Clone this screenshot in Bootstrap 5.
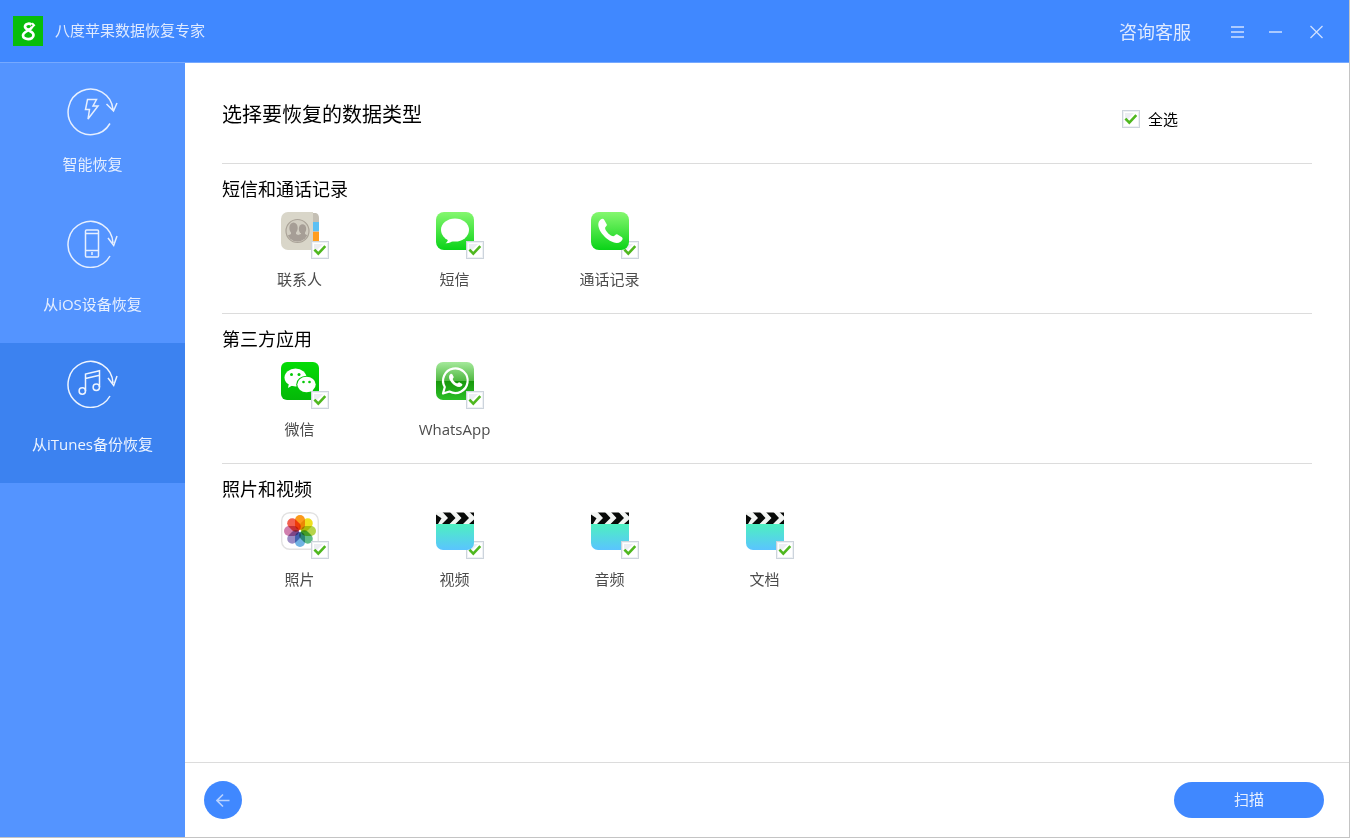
<!DOCTYPE html>
<html lang="zh-CN">
<head>
<meta charset="utf-8">
<meta name="viewport" content="width=device-width, initial-scale=1">
<title>八度苹果数据恢复专家</title>
<link href="https://cdn.jsdelivr.net/npm/bootstrap@5.3.0/dist/css/bootstrap.min.css" rel="stylesheet">
<style>
  body { font-family: "Open Sans", "Noto Sans CJK SC", sans-serif; font-size: 15px; line-height: 20px; color: #000; }
  .app-window { min-height: 100vh; border-right: 1px solid #c4c4c4; border-bottom: 1px solid #c4c4c4; }
  .title-bar { height: 63px; background: #4088ff; border-bottom: 1px solid #76a9ff; padding: 0 26px 0 13px; color: #dfeaff; }
  .app-name { padding: 0 0 2px 12px; }
  .title-tools { padding-top: 2px; }
  .title-bar a { font-size: 18px; color: #dfeaff; margin-right: 39px; }
  .bare-btn { border: 0; padding: 0; background: none; color: #cfe0ff; display: flex; }
  .side-nav { width: 185px; background: #5494ff; }
  .side-nav a { height: 140px; padding: 16px 0 29px; color: #e6efff; }
  .side-nav a:first-child { padding-top: 24px; }
  .side-nav a.active { background: #3c82f0; color: #edf4ff; }
  .type-panel { padding: 0 37px; }
  .panel-head { height: 100px; padding: 4px 134px 0 0; }
  .panel-head h1 { font-size: 20px; line-height: 28px; font-weight: 400; margin: 0; }
  .panel-head label { margin-top: 7px; }
  .type-group { height: 150px; border-top: 1px solid #dcdcdc; padding-top: 13px; }
  .type-group h2 { font-size: 18px; line-height: 24px; font-weight: 400; margin: 0 0 11px; }
  .type-tile { width: 155px; color: #4c4c4c; }
  .tile-art { width: 38px; height: 38px; margin-bottom: 19px; }
  .tile-art svg { position: relative; display: block; }
  .tick { appearance: none; width: 18px; height: 18px; margin: 0; flex: none; border: 1px solid #cdd4dc; outline: 1px solid #eef1f5; outline-offset: -2px;
    background: #fff url("data:image/svg+xml,%3Csvg xmlns='http://www.w3.org/2000/svg' viewBox='0 0 16 16'%3E%3Cpath d='M2 2h9L2 11z' fill='%23eceef3'/%3E%3Cpath d='M2.4 7.600l3.900 4 7-7.400' fill='none' stroke='%234fb81f' stroke-width='2.600'/%3E%3C/svg%3E") center/16px 16px; }
  .tick:not(:checked) { background-image: none; }
  .tile-art .tick { position: absolute; left: 30px; top: 29px; }
  .under .tick { z-index: 0; }
  .under svg { z-index: 1; }
  .action-bar { height: 75px; border-top: 1px solid #dcdcdc; padding: 0 25px 1px 19px; }
  .back-btn { width: 38px; height: 38px; border: 0; border-radius: 50%; background: #4088ff; color: #b9d2ff; }
  .scan-btn { width: 150px; height: 36px; padding: 0 0 2px; border: 0; border-radius: 18px; background: #4088ff; color: #e6efff; }
</style>
</head>
<body>
<svg width="0" height="0" class="position-absolute" aria-hidden="true">
  <defs>
    <linearGradient id="greenFill" x2="0" y2="1"><stop stop-color="#85f76f"/><stop offset="1" stop-color="#0ad318"/></linearGradient>
    <linearGradient id="chatFill" x2="0" y2="1"><stop stop-color="#04dc06"/><stop offset="1" stop-color="#04b808"/></linearGradient>
    <linearGradient id="whatsFill" x2="0" y2="1"><stop stop-color="#a5e99b"/><stop offset=".49" stop-color="#51b943"/><stop offset=".51" stop-color="#18990c"/><stop offset="1" stop-color="#2cbf27"/></linearGradient>
    <linearGradient id="clipFill" x2="0" y2="1"><stop stop-color="#4df0c0"/><stop offset="1" stop-color="#5ac4ff"/></linearGradient>
    <clipPath id="clapTop"><path d="M0 .5h38v11.500H0z"/></clipPath>
    <clipPath id="faceDisc"><circle cx="16.500" cy="19" r="10.600"/></clipPath>
    <symbol id="clapper" viewBox="0 0 38 38">
      <path d="M0 12h38V31a7 7 0 0 1-7 7H7a7 7 0 0 1-7-7z" fill="url(#clipFill)"/>
      <g clip-path="url(#clapTop)"><path d="M0 0h38v12H0z" fill="#f3f5f3"/>
      <path d="M0 2.500l5.500 3.700L2 12H0zM6.500 0h7.500l5.500 6-6 6H6l6-6zM20 0h7.500l5.500 6-6 6h-7.500l6-6zM33.500 0H38v4.500zM38 7.500V12h-5z" fill="#080a08"/></g>
    </symbol>
    <path id="handset" d="M8 9.500c1.500-3 4.200-3.800 5.300-1.600l2.400 4.300c.9 1.700-1.700 2.500-1.600 4 .3 3 5.500 8 8.300 8 1.700 0 2.200-2.700 4.100-1.700l4.100 2.500c2 1.400.8 3.300-1 4.700C22 35.500 3.500 18.500 8 9.500z"/>
  </defs>
</svg>

<div class="app-window d-flex flex-column">
  <header class="title-bar d-flex align-items-center justify-content-between">
    <div class="d-flex align-items-center">
      <svg width="30" height="30" viewBox="0 0 30 30" aria-hidden="true"><path d="M0 0h30v30H0z" fill="#08bd0b"/><g fill="none" stroke="#fff"><path d="M18.500 8.500c-2.500-1.500-6.500-.8-6.500 2.300 0 3.600 8.500 4 8.500 8.300 0 5.300-10.500 5.300-10.500.3 0-4.500 9-5 9-9" stroke-width="2.700"/><path d="M19 7.300l2 2-2 2" stroke-width="2"/></g></svg>
      <span class="app-name">八度苹果数据恢复专家</span>
    </div>
    <div class="title-tools d-flex align-items-center">
      <a href="#" class="text-decoration-none">咨询客服</a>
      <button class="bare-btn me-4" type="button" aria-label="菜单"><svg width="14" height="14" fill="none" stroke="currentColor" stroke-width="1.500"><path d="M1 2h13M1 7h13M1 12h13"/></svg></button>
      <button class="bare-btn me-4" type="button" aria-label="最小化"><svg width="14" height="14" fill="none" stroke="currentColor" stroke-width="1.500"><path d="M1 7h13"/></svg></button>
      <button class="bare-btn ms-1" type="button" aria-label="关闭"><svg width="13" height="14" fill="none" stroke="currentColor" stroke-width="1.300"><path d="M.500 1l12 12M12.500 1l-12 12"/></svg></button>
    </div>
  </header>

  <div class="d-flex flex-grow-1">
    <nav class="side-nav flex-shrink-0">
      <a href="#" class="d-flex flex-column align-items-center justify-content-between text-decoration-none">
        <svg width="53" height="49" viewBox="0 0 53 49" fill="none" stroke="currentColor" stroke-width="1.500"><path d="M47 22.500A22.500 22.800 0 1 0 44 36.500M40.500 17l7 7L51 16M21.500 12.500h9l-3.500 6.500h5l-10 13 1.500-9.500h-4z"/></svg>
        <span>智能恢复</span>
      </a>
      <a href="#" class="d-flex flex-column align-items-center justify-content-between text-decoration-none">
        <svg width="53" height="49" viewBox="0 0 53 49" fill="none" stroke="currentColor" stroke-width="1.500"><path d="M47 24A22.500 23 0 1 0 44 37M42 19l5.700 7.500L51 17"/><rect x="19.500" y="11" width="13" height="27" rx="1"/><path d="M19.500 14.500h13M19.500 31.500h13M26 33v3"/></svg>
        <span>从iOS设备恢复</span>
      </a>
      <a href="#" class="active d-flex flex-column align-items-center justify-content-between text-decoration-none" aria-current="page">
        <svg width="53" height="49" viewBox="0 0 53 49" fill="none" stroke="currentColor" stroke-width="1.500"><path d="M47 24A22.500 23 0 1 0 44 37M42 19l5.700 7.500L51 17M19.500 32V15l14-3.200V28M19.500 19.500l14-3.200"/><circle cx="16.300" cy="32" r="3.200"/><circle cx="30.300" cy="28.300" r="3.200"/></svg>
        <span>从iTunes备份恢复</span>
      </a>
    </nav>

    <div class="d-flex flex-column flex-grow-1">
      <main class="type-panel flex-grow-1">
        <div class="panel-head d-flex align-items-center justify-content-between">
          <h1>选择要恢复的数据类型</h1>
          <label class="d-flex align-items-center gap-2"><input class="tick" id="all" type="checkbox" checked><span>全选</span></label>
        </div>

        <section class="type-group">
          <h2>短信和通话记录</h2>
          <div class="d-flex">
            <label class="type-tile d-flex flex-column align-items-center">
              <span class="tile-art position-relative">
                <svg width="38" height="38"><path d="M30 1h5q3 1 3 5v26q0 5-4 6h-6z" fill="#c4bfb4"/><path d="M32 10h6v9h-6z" fill="#5cc0f4"/><path d="M32 20h6v10h-6z" fill="#ff9d1f"/><path d="M32 30h6v4l-6 3z" fill="#e7e4dc"/><path d="M7 0h25v38H7a7 7 0 0 1-7-7V7a7 7 0 0 1 7-7z" fill="#d9d6c9"/><circle cx="16.500" cy="19" r="11.500" fill="#d2cec2" stroke="#aaa398" stroke-width="1.200"/><g clip-path="url(#faceDisc)" fill="#a69e96"><ellipse cx="12.500" cy="16" rx="4.200" ry="5.500"/><path d="M3 31c0-7 3-7 7-9v-4h5v4c5 2 5 3 6 9z"/><ellipse cx="21.500" cy="17" rx="3.700" ry="4.800"/><path d="M17 23l3-1v-3h4v3c4 2 5 3 5 7h-8z"/></g></svg>
                <input class="tick" type="checkbox" checked>
              </span>联系人
            </label>
            <label class="type-tile d-flex flex-column align-items-center">
              <span class="tile-art position-relative">
                <svg width="38" height="38"><rect width="38" height="38" rx="8" fill="url(#greenFill)"/><ellipse cx="19" cy="18" rx="14" ry="11.500" fill="#fff"/><path d="M12 26c0 2.500-.5 4-2.500 5.300 4 .2 6.500-1.300 8-3.300z" fill="#fff"/></svg>
                <input class="tick" type="checkbox" checked>
              </span>短信
            </label>
            <label class="type-tile d-flex flex-column align-items-center">
              <span class="tile-art position-relative under">
                <svg width="38" height="38"><rect width="38" height="38" rx="8" fill="url(#greenFill)"/><use href="#handset" fill="#fff"/></svg>
                <input class="tick" type="checkbox" checked>
              </span>通话记录
            </label>
          </div>
        </section>

        <section class="type-group">
          <h2>第三方应用</h2>
          <div class="d-flex">
            <label class="type-tile d-flex flex-column align-items-center">
              <span class="tile-art position-relative">
                <svg width="38" height="38"><rect width="38" height="38" rx="6" fill="url(#chatFill)"/><path d="M8 21l-1 5 5-3z" fill="#fff"/><ellipse cx="14.500" cy="15.500" rx="11" ry="9" fill="#fff"/><ellipse cx="25.500" cy="22.500" rx="10.300" ry="8.800" fill="#05c707"/><ellipse cx="25.500" cy="22.500" rx="9.200" ry="7.700" fill="#fff"/><path d="M28 28l4 3-.5-5z" fill="#fff"/><g fill="#05c707"><circle cx="10.500" cy="12.500" r="1.500"/><circle cx="18" cy="12.500" r="1.500"/><circle cx="22.500" cy="20" r="1.300"/><circle cx="28.500" cy="20" r="1.300"/></g></svg>
                <input class="tick" type="checkbox" checked>
              </span>微信
            </label>
            <label class="type-tile d-flex flex-column align-items-center">
              <span class="tile-art position-relative">
                <svg width="38" height="38"><rect width="38" height="38" rx="7" fill="url(#whatsFill)"/><path d="M7 31.500l1.800-6.500A12.300 12.300 0 1 1 13.500 29.500z" fill="none" stroke="#fff" stroke-width="2.200" stroke-linejoin="round"/><use href="#handset" fill="#fff" transform="translate(9 8) scale(.55)"/></svg>
                <input class="tick" type="checkbox" checked>
              </span>WhatsApp
            </label>
          </div>
        </section>

        <section class="type-group">
          <h2>照片和视频</h2>
          <div class="d-flex">
            <label class="type-tile d-flex flex-column align-items-center">
              <span class="tile-art position-relative">
                <svg width="38" height="38"><rect x=".7" y=".7" width="36.600" height="36.600" rx="8" fill="#fff" stroke="#e2e2e2" stroke-width="1.400"/>
                  <g transform="translate(19 19)" style="isolation:isolate"><g style="mix-blend-mode:multiply"><rect x="-5" y="-16" width="10" height="15" rx="5" fill="#fb9a1c"/></g>
                  <g style="mix-blend-mode:multiply"><rect x="-5" y="-16" width="10" height="15" rx="5" fill="#efe01d" transform="rotate(45)"/></g>
                  <g style="mix-blend-mode:multiply"><rect x="-5" y="-16" width="10" height="15" rx="5" fill="#b5d44a" transform="rotate(90)"/></g>
                  <g style="mix-blend-mode:multiply"><rect x="-5" y="-16" width="10" height="15" rx="5" fill="#5fbd86" transform="rotate(135)"/></g>
                  <g style="mix-blend-mode:multiply"><rect x="-5" y="-16" width="10" height="15" rx="5" fill="#6fb2e2" transform="rotate(180)"/></g>
                  <g style="mix-blend-mode:multiply"><rect x="-5" y="-16" width="10" height="15" rx="5" fill="#9a8bc4" transform="rotate(225)"/></g>
                  <g style="mix-blend-mode:multiply"><rect x="-5" y="-16" width="10" height="15" rx="5" fill="#d07fae" transform="rotate(270)"/></g>
                  <g style="mix-blend-mode:multiply"><rect x="-5" y="-16" width="10" height="15" rx="5" fill="#f2604f" transform="rotate(315)"/></g></g></svg>
                <input class="tick" type="checkbox" checked>
              </span>照片
            </label>
            <label class="type-tile d-flex flex-column align-items-center">
              <span class="tile-art position-relative under"><svg width="38" height="38"><use href="#clapper"/></svg><input class="tick" type="checkbox" checked></span>视频
            </label>
            <label class="type-tile d-flex flex-column align-items-center">
              <span class="tile-art position-relative"><svg width="38" height="38"><use href="#clapper"/></svg><input class="tick" type="checkbox" checked></span>音频
            </label>
            <label class="type-tile d-flex flex-column align-items-center">
              <span class="tile-art position-relative"><svg width="38" height="38"><use href="#clapper"/></svg><input class="tick" type="checkbox" checked></span>文档
            </label>
          </div>
        </section>
      </main>

      <footer class="action-bar d-flex align-items-center justify-content-between">
        <button class="back-btn d-flex align-items-center justify-content-center p-0" type="button" aria-label="返回"><svg width="14" height="14" fill="none" stroke="currentColor" stroke-width="1.600"><path d="M13.500 7.500H1M7 1.500l-6 6 6 6"/></svg></button>
        <button class="scan-btn" type="button">扫描</button>
      </footer>
    </div>
  </div>
</div>
<script src="https://cdn.jsdelivr.net/npm/bootstrap@5.3.0/dist/js/bootstrap.bundle.min.js"></script>
</body>
</html>
